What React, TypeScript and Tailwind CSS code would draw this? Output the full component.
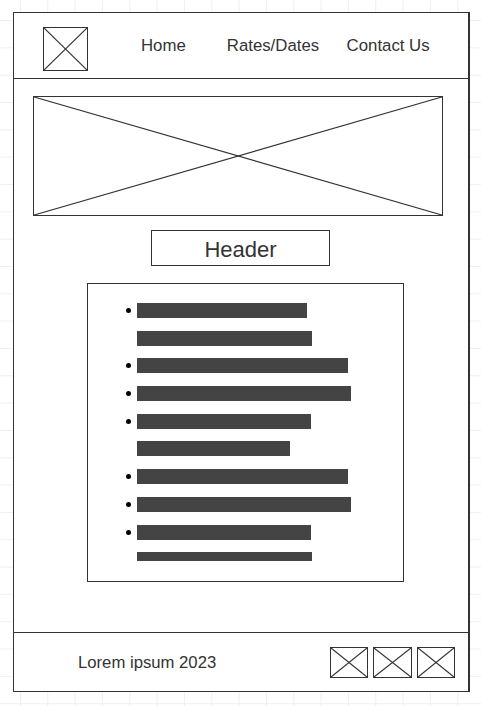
import React from "react";

function XBox({ className }: { className: string }) {
  return (
    <div className={`relative border border-[#333] ${className}`}>
      <svg className="absolute inset-0 h-full w-full" viewBox="0 0 100 100" preserveAspectRatio="none">
        <line x1="0" y1="0" x2="100" y2="100" stroke="#333" strokeWidth="1.2" vectorEffect="non-scaling-stroke" />
        <line x1="100" y1="0" x2="0" y2="100" stroke="#333" strokeWidth="1.2" vectorEffect="non-scaling-stroke" />
      </svg>
    </div>
  );
}

const rows: { bullet: boolean; w: number; h?: number }[] = [
  { bullet: true, w: 170 },
  { bullet: false, w: 175 },
  { bullet: true, w: 211 },
  { bullet: true, w: 214 },
  { bullet: true, w: 174 },
  { bullet: false, w: 153 },
  { bullet: true, w: 211 },
  { bullet: true, w: 214 },
  { bullet: true, w: 174 },
  { bullet: false, w: 175, h: 9 },
];

export default function App() {
  return (
    <div
      className="min-h-[706px] w-full pt-[12px] pl-[13px] bg-white bg-[linear-gradient(to_right,#efefef_1px,transparent_1px),linear-gradient(to_bottom,#efefef_1px,transparent_1px)] bg-[size:27.333px_27.333px] bg-[position:20px_20px]"
      style={{ fontFamily: '"Liberation Sans", Arial, sans-serif' }}
    >
      <div className="flex h-[680px] w-[457px] flex-col border border-r-2 border-[#333] bg-white">
        {/* header */}
        <div className="flex h-[66px] shrink-0 items-start border-b border-[#333] text-[16.8px] leading-[18px] text-[#333]">
          <XBox className="ml-[29px] mt-[14px] h-[44px] w-[45px]" />
          <span className="ml-[53px] mt-[24px]">Home</span>
          <span className="ml-[41px] mt-[24px]">Rates/Dates</span>
          <span className="ml-[27.5px] mt-[24px]">Contact Us</span>
        </div>

        {/* main */}
        <div className="flex flex-1 flex-col">
          <XBox className="ml-[19px] mt-[17px] h-[120px] w-[410px]" />
          <div className="ml-[137px] mt-[14px] flex h-[36px] w-[179px] items-center justify-center border border-[#333] pt-[3px] text-[22px] leading-none text-[#333]">
            Header
          </div>
          <div className="ml-[73px] mt-[17px] flex h-[299px] w-[317px] flex-col gap-[12.7px] border border-[#333] pt-[19px]">
            {rows.map((r, i) => (
              <div key={i} className="flex h-[15px] items-start">
                <div className="flex h-[15px] w-[49px] items-center">
                  {r.bullet && <span className="ml-[38px] h-[5px] w-[5px] rounded-full bg-black" />}
                </div>
                <div className="bg-[#444]" style={{ width: r.w, height: r.h ?? 15 }} />
              </div>
            ))}
          </div>
        </div>

        {/* footer */}
        <div className="flex h-[59px] shrink-0 items-center border-t border-[#333]">
          <span className="ml-[64px] text-[16.7px] leading-[19px] text-[#333]">Lorem ipsum 2023</span>
          <div className="ml-auto mr-[13px] flex gap-[5px]">
            <XBox className="h-[31px] w-[38px]" />
            <XBox className="h-[31px] w-[39px]" />
            <XBox className="h-[31px] w-[38px]" />
          </div>
        </div>
      </div>
    </div>
  );
}
